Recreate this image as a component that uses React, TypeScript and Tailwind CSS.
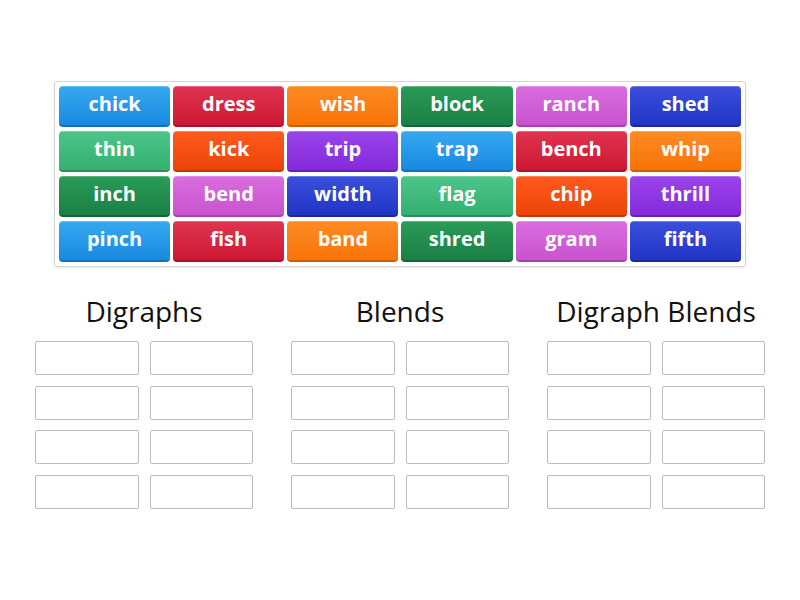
const tones = [
  'from-[#36a9f0] to-[#1789e0] border-[#1470b8]',
  'from-[#e0334f] to-[#cc1733] border-[#a8122a]',
  'from-[#ff8a22] to-[#f77406] border-[#cc5f04]',
  'from-[#2a9b58] to-[#1a8044] border-[#146636]',
  'from-[#d96ddf] to-[#c853ce] border-[#a640ab]',
  'from-[#3a4fdc] to-[#2234c4] border-[#1a289c]',
  'from-[#4cc58a] to-[#35b070] border-[#2a8f5a]',
  'from-[#ff5a1e] to-[#ec4406] border-[#c23704]',
  'from-[#9a44ea] to-[#8429dc] border-[#6a1fb4]',
]

const words = [
  'chick', 'dress', 'wish', 'block', 'ranch', 'shed',
  'thin', 'kick', 'trip', 'trap', 'bench', 'whip',
  'inch', 'bend', 'width', 'flag', 'chip', 'thrill',
  'pinch', 'fish', 'band', 'shred', 'gram', 'fifth',
]

const groups = ['Digraphs', 'Blends', 'Digraph Blends']

export default function App() {
  return (
    <div
      className="w-[800px] h-[600px] bg-white overflow-hidden"
      style={{ fontFamily: '"Open Sans", "Liberation Sans", sans-serif' }}
    >
      <div className="mx-auto mt-[81px] w-[692px] border border-[#d4d4d4] rounded-[3px] p-[4px] shadow-[0_1px_2px_rgba(0,0,0,0.08)]">
        <div className="grid grid-cols-6 gap-x-[3px] gap-y-[4px]">
          {words.map((w, i) => (
            <div
              key={w}
              className={
                'h-[41px] rounded-[4px] border-b-2 bg-linear-to-b flex items-center justify-center text-white text-[20px] font-bold leading-none pb-[3px] shadow-[inset_0_1px_0_rgba(255,255,255,0.25)] ' +
                tones[i % 9]
              }
            >
              {w}
            </div>
          ))}
        </div>
      </div>

      <div className="mt-[26px] flex justify-center gap-[38px]">
        {groups.map(g => (
          <div key={g} className="w-[218px]">
            <div className="h-[36px] text-center text-[28px] leading-[36px] text-[#111] whitespace-nowrap">{g}</div>
            <div className="mt-[12px] grid grid-cols-2 gap-x-[11px] gap-y-[10.5px]">
              {Array.from({ length: 8 }).map((_, k) => (
                <div key={k} className="h-[34px] border border-[#bdbdbd] rounded-[2px] bg-white" />
              ))}
            </div>
          </div>
        ))}
      </div>
    </div>
  )
}
